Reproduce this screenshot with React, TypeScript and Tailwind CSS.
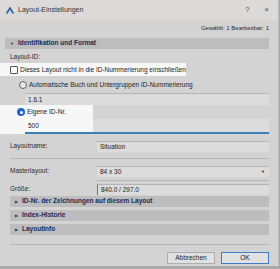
import React from "react";

const font = { fontFamily: '"Liberation Sans", "Noto Sans", sans-serif' };

const SectionBar = ({ label, open = false, wide = false }: { label: string; open?: boolean; wide?: boolean }) => (
  <div
    className={`flex items-center h-[11px] bg-[#bdbdbd] mr-[9px] ${wide ? "ml-[5px]" : "ml-[10px]"} pl-[5px] gap-[4px]`}
  >
    <span className="text-[4px] text-[#333]">{open ? "▼" : "▶"}</span>
    <span className="text-[6.5px] font-bold text-[#1c2a58] leading-none whitespace-nowrap">{label}</span>
  </div>
);

const Field = ({ value, className = "" }: { value: string; className?: string }) => (
  <div className={`h-[11px] flex items-center pl-[3px] text-[6.5px] text-[#222] bg-[#dcdcdc] border-t border-[#b3b3b3] ${className}`}>
    {value}
  </div>
);

const App = () => {
  return (
    <div className="w-[280px] h-[269px] bg-[#a9a9a9] overflow-hidden" style={font}>
      <div className="w-[279px] h-[266px] bg-[#d3d3d3] flex flex-col border-r border-[#bcbcbc]">
        {/* title bar */}
        <div className="h-[20px] bg-[#dcdad8] flex items-center pl-[6px] pr-[9px]">
          <svg width="8" height="7" viewBox="0 0 8 7" className="mr-[4px]">
            <path d="M1 6 L4 1 L7 6" fill="none" stroke="#2d5da8" strokeWidth="1.6" strokeLinecap="round" />
          </svg>
          <span className="text-[7px] text-[#333]">Layout-Einstellungen</span>
          <span className="ml-auto text-[7px] text-[#444]">?</span>
          <span className="ml-[15px] text-[8px] text-[#444]">×</span>
        </div>

        <div className="h-[16px] flex items-center justify-end pr-[9px] text-[6px] text-[#2a2a2a]">
          Gewählt: 1 Bearbeitbar: 1
        </div>

        <div className="mt-[2px]">
          <SectionBar label="Identifikation und Format" open wide />
        </div>

        <div className="h-[13px] flex items-end pl-[10px] text-[6.5px] text-[#2a2a2a]">Layout-ID:</div>

        <div className="mt-[1px] w-[186px] h-[13px] bg-[#f7f7f7] flex items-center pl-[10px] gap-[2px]">
          <span className="w-[8px] h-[8px] border border-[#555] bg-white rounded-[1px] shrink-0" />
          <span className="text-[6.5px] text-[#222] whitespace-nowrap">Dieses Layout nicht in die ID-Nummerierung einschließen</span>
        </div>

        <div className="h-[17px] flex items-center pl-[19px] gap-[2px]">
          <span className="w-[8px] h-[8px] rounded-full border border-[#666] bg-[#e6e6e6] shrink-0" />
          <span className="text-[6.5px] text-[#222] whitespace-nowrap">Automatische Buch und Untergruppen ID-Nummerierung</span>
        </div>

        <div className="flex">
          <Field value="1.6.1" className="ml-[25px] mr-[9px] flex-1 h-[12px]" />
        </div>

        <div className="w-[93px] h-[14px] bg-[#f7f7f7] flex items-center pl-[17px] gap-[2px]">
          <span className="w-[8px] h-[8px] rounded-full bg-[#1f64c8] flex items-center justify-center shrink-0">
            <span className="w-[3px] h-[3px] rounded-full bg-white" />
          </span>
          <span className="text-[6.5px] text-[#222]">Eigene ID-Nr.</span>
        </div>
        <div className="flex h-[15px]">
          <div className="w-[25px] bg-[#f7f7f7]" />
          <div className="flex-1 mr-[9px] flex flex-col bg-[linear-gradient(to_right,#f7f7f7_68px,#dcdcdc_68px)]">
            <div className="flex-1 flex items-center pl-[3px] text-[6.5px] text-[#222]">500</div>
            <div className="h-[2px] bg-[#3d7fb8]" />
          </div>
        </div>

        <div className="h-[6px]" />

        <div className="flex items-center h-[12px] pl-[10px]">
          <span className="w-[87px] text-[6.5px] text-[#2a2a2a]">Layoutname:</span>
          <Field value="Situation" className="flex-1 mr-[9px]" />
        </div>

        <div className="h-[1px] bg-[#b5b5b5] ml-[10px] mr-[9px] my-[6px]" />

        <div className="flex items-center h-[12px] pl-[10px]">
          <span className="w-[87px] text-[6.5px] text-[#2a2a2a]">Masterlayout:</span>
          <div className="flex-1 mr-[9px] h-[11px] flex items-center pl-[3px] text-[6.5px] text-[#222] bg-[#dcdcdc] border-t border-[#b3b3b3]">
            84 x 30
            <span className="ml-auto mr-[4px] text-[4px] text-[#222]">▼</span>
          </div>
        </div>

        <div className="h-[1px] bg-[#b5b5b5] ml-[97px] mr-[9px] mt-[3px]" />

        <div className="flex items-center h-[12px] pl-[10px] mt-[2px]">
          <span className="w-[87px] text-[6.5px] text-[#2a2a2a]">Größe:</span>
          <Field value="840.0 / 297.0" className="flex-1 mr-[9px] border-l border-l-[#777]" />
        </div>

        <div className="flex flex-col gap-[3px] mt-[1px]">
          <SectionBar label="ID-Nr. der Zeichnungen auf diesem Layout" />
          <SectionBar label="Index-Historie" />
          <SectionBar label="Layoutinfo" />
        </div>

        <div className="h-[1px] bg-[#b5b5b5] ml-[10px] mr-[9px] mt-[9px]" />

        <div className="flex justify-end gap-[6px] pr-[9px] mt-[7px]">
          <button className="w-[48px] h-[12px] bg-[#e1e1e1] border border-[#adadad] text-[6.5px] text-[#222] flex items-center justify-center">
            Abbrechen
          </button>
          <button className="w-[48px] h-[12px] bg-[#e1e1e1] border border-[#3d7fc8] text-[6.5px] text-[#222] flex items-center justify-center">
            OK
          </button>
        </div>
      </div>
    </div>
  );
};

export default App;
